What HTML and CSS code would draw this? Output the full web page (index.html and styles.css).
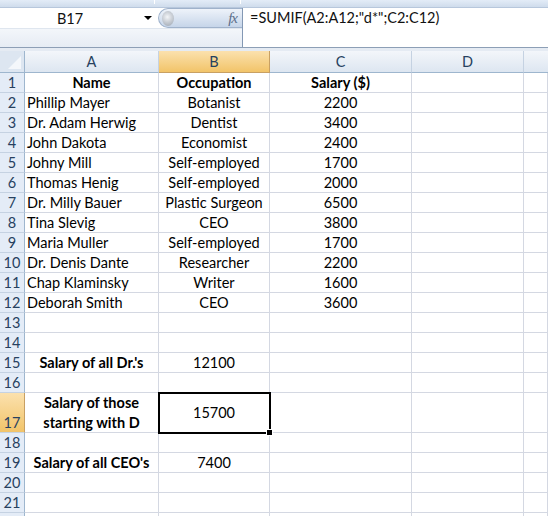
FILE: index.html
```html
<!DOCTYPE html>
<html>
<head>
<meta charset="utf-8">
<link rel="stylesheet" href="styles.css">
</head>
<body>
<div class="app">
  <div class="topband"><span class="notch n1"></span><span class="notch n2"></span></div>
  <div class="fbar">
    <div class="namebox"><span class="nb-text">B17</span><span class="dd"></span></div>
    <div class="fxbtn"><span class="knob"></span><span class="fx">fx</span></div>
    <div class="formula">=SUMIF(A2:A12;"d*";C2:C12)</div>
    <div class="fbar-under"></div>
  </div>
  <div class="gap"></div>
  <div class="sheet">
    <div class="corner"><span class="tri"></span></div>
    <div class="ch">A</div><div class="ch sel">B</div><div class="ch">C</div><div class="ch">D</div><div class="ch last"></div>

    <div class="rh">1</div><div class="c ctr b">Name</div><div class="c ctr b">Occupation</div><div class="c ctr b">Salary ($)</div><div class="c"></div><div class="c"></div>
    <div class="rh">2</div><div class="c">Phillip Mayer</div><div class="c ctr">Botanist</div><div class="c ctr">2200</div><div class="c"></div><div class="c"></div>
    <div class="rh">3</div><div class="c">Dr. Adam Herwig</div><div class="c ctr">Dentist</div><div class="c ctr">3400</div><div class="c"></div><div class="c"></div>
    <div class="rh">4</div><div class="c">John Dakota</div><div class="c ctr">Economist</div><div class="c ctr">2400</div><div class="c"></div><div class="c"></div>
    <div class="rh">5</div><div class="c">Johny Mill</div><div class="c ctr">Self-employed</div><div class="c ctr">1700</div><div class="c"></div><div class="c"></div>
    <div class="rh">6</div><div class="c">Thomas Henig</div><div class="c ctr">Self-employed</div><div class="c ctr">2000</div><div class="c"></div><div class="c"></div>
    <div class="rh">7</div><div class="c">Dr. Milly Bauer</div><div class="c ctr">Plastic Surgeon</div><div class="c ctr">6500</div><div class="c"></div><div class="c"></div>
    <div class="rh">8</div><div class="c">Tina Slevig</div><div class="c ctr">CEO</div><div class="c ctr">3800</div><div class="c"></div><div class="c"></div>
    <div class="rh">9</div><div class="c">Maria Muller</div><div class="c ctr">Self-employed</div><div class="c ctr">1700</div><div class="c"></div><div class="c"></div>
    <div class="rh">10</div><div class="c">Dr. Denis Dante</div><div class="c ctr">Researcher</div><div class="c ctr">2200</div><div class="c"></div><div class="c"></div>
    <div class="rh">11</div><div class="c">Chap Klaminsky</div><div class="c ctr">Writer</div><div class="c ctr">1600</div><div class="c"></div><div class="c"></div>
    <div class="rh">12</div><div class="c">Deborah Smith</div><div class="c ctr">CEO</div><div class="c ctr">3600</div><div class="c"></div><div class="c"></div>
    <div class="rh">13</div><div class="c"></div><div class="c"></div><div class="c"></div><div class="c"></div><div class="c"></div>
    <div class="rh">14</div><div class="c"></div><div class="c"></div><div class="c"></div><div class="c"></div><div class="c"></div>
    <div class="rh">15</div><div class="c ctr b">Salary of all Dr.'s</div><div class="c ctr">12100</div><div class="c"></div><div class="c"></div><div class="c"></div>
    <div class="rh">16</div><div class="c"></div><div class="c"></div><div class="c"></div><div class="c"></div><div class="c"></div>
    <div class="rh sel bottom">17</div><div class="c ctr b wrap">Salary of those starting with D</div><div class="c ctr active">15700<span class="handle"></span></div><div class="c"></div><div class="c"></div><div class="c"></div>
    <div class="rh">18</div><div class="c"></div><div class="c"></div><div class="c"></div><div class="c"></div><div class="c"></div>
    <div class="rh">19</div><div class="c ctr b">Salary of all CEO's</div><div class="c ctr">7400</div><div class="c"></div><div class="c"></div><div class="c"></div>
    <div class="rh">20</div><div class="c"></div><div class="c"></div><div class="c"></div><div class="c"></div><div class="c"></div>
    <div class="rh">21</div><div class="c"></div><div class="c"></div><div class="c"></div><div class="c"></div><div class="c"></div>
    <div class="rh"></div><div class="c"></div><div class="c"></div><div class="c"></div><div class="c"></div><div class="c"></div>
  </div>
</div>
</body>
</html>
```
FILE: styles.css
```css
html, body {
  margin: 0;
  padding: 0;
  background: #ffffff;
  overflow: hidden;
}
.app {
  width: 548px;
  height: 516px;
  overflow: hidden;
  font-family: Lato, "Open Sans", sans-serif;
  font-size: 14.5px;
  color: #000;
}
.topband {
  height: 7px;
  background: linear-gradient(#e3ecf7, #cfdcec);
  border-bottom: 1px solid #b7c7dc;
  position: relative;
}
.notch {
  position: absolute;
  top: 0;
  width: 1px;
  height: 4px;
  background: #ffffff;
}
.n1 { left: 154px; }
.n2 { left: 240px; }
.fbar {
  display: grid;
  grid-template-columns: 158px 84px 1fr;
  grid-template-rows: 20px 19px;
  border-bottom: 1px solid #8d9fb6;
}
.namebox {
  grid-column: 1;
  grid-row: 1;
  background: #fff;
  display: flex;
  align-items: center;
  position: relative;
}
.nb-text {
  width: 140px;
  text-align: center;
  color: #111;
}
.dd {
  position: absolute;
  left: 144px;
  top: 8px;
  width: 0;
  height: 0;
  border-left: 4px solid transparent;
  border-right: 4px solid transparent;
  border-top: 4px solid #000;
}
.fxbtn {
  grid-column: 2;
  grid-row: 1;
  background: linear-gradient(#eef3fa, #c6d5e9);
  border-radius: 11px 0 0 11px;
  border: 1px solid #9fb2cb;
  border-right: none;
  box-sizing: border-box;
  display: flex;
  align-items: center;
  justify-content: space-between;
  padding: 0 5px 0 3px;
}
.knob {
  width: 12px;
  height: 15px;
  border-radius: 50%;
  background: radial-gradient(circle at 45% 40%, #f3f5f8 0, #c9ced5 45%, #9aa3af 100%);
}
.fx {
  font-family: "Liberation Serif", serif;
  font-style: italic;
  font-size: 15px;
  color: #5b6f8a;
  letter-spacing: -1px;
}
.formula {
  grid-column: 3;
  grid-row: 1 / span 2;
  background: #fff;
  border-left: 1px solid #8398b4;
  padding: 1px 0 0 7px;
  line-height: 18px;
  color: #111;
}
.fbar-under {
  grid-column: 1 / span 2;
  grid-row: 2;
  background: linear-gradient(#f3f6fa, #e6ecf4);
  border-top: 1px solid #dfe6ef;
}
.gap {
  height: 3px;
  background: #e5ebf3;
}
.sheet {
  display: grid;
  grid-template-columns: 25px 134px 111px 142px 112px 24px;
  grid-template-rows: 22px repeat(16, 20px) 40px repeat(5, 20px);
}
.sheet > div {
  box-sizing: border-box;
  display: flex;
  align-items: center;
  overflow: hidden;
  white-space: nowrap;
}
.corner {
  background: #dde6f1;
  border-right: 1px solid #9eb6ce;
  border-bottom: 1px solid #9eb6ce;
  position: relative;
}
.tri {
  position: absolute;
  right: 3px;
  bottom: 3px;
  width: 13px;
  height: 13px;
  background: #f4f7fb;
  clip-path: polygon(100% 0, 100% 100%, 0 100%);
}
.ch {
  justify-content: center;
  background: linear-gradient(#f3f6fa, #dde6f1);
  border-right: 1px solid #c5d2e2;
  border-bottom: 1px solid #9eb6ce;
  color: #27415f;
}
.ch.sel {
  background: linear-gradient(#fbe1ae, #f2c469);
  border-right: 1px solid #c8a063;
  border-bottom: 1px solid #c8a063;
}
.ch.last {
  border-right: none;
}
.rh {
  justify-content: center;
  background: #e4ecf7;
  border-right: 1px solid #9eb6ce;
  border-bottom: 1px solid #c5d2e2;
  color: #27415f;
}
.rh.sel {
  background: linear-gradient(#fbe1ae, #f2c469);
  border-right: 1px solid #c8a063;
}
.rh.bottom {
  align-items: flex-end;
  padding-bottom: 1px;
}
.c {
  border-right: 1px solid #d4d8e2;
  border-bottom: 1px solid #d4d8e2;
  padding: 0 2px;
}
.ctr {
  justify-content: center;
  text-align: center;
}
.b {
  font-weight: bold;
}
.wrap {
  white-space: normal !important;
  line-height: 20px;
  padding: 0 6px;
}
.active {
  position: relative;
  outline: 2px solid #000;
  outline-offset: -1px;
  z-index: 2;
  overflow: visible !important;
}
.handle {
  position: absolute;
  right: -4px;
  bottom: -4px;
  width: 5px;
  height: 5px;
  background: #000;
  border: 1px solid #fff;
}
```
